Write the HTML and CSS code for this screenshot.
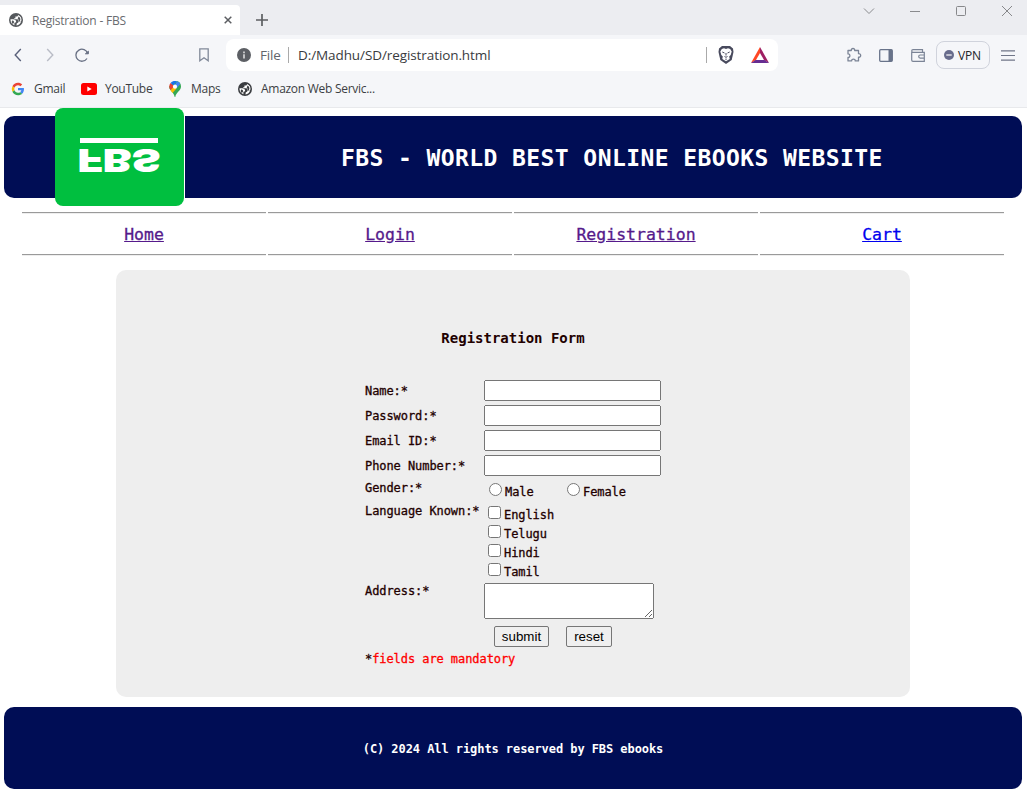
FILE: index.html
```
<!DOCTYPE html>
<html lang="en">
<head>
<meta charset="utf-8">
<title>Registration - FBS</title>
<link rel="stylesheet" href="styles.css">
</head>
<body>
<svg width="0" height="0" class="defs">
  <symbol id="globe" viewBox="0 0 14 14"><circle cx="7" cy="7" r="7" fill="currentColor"/><path d="M1.500 6.300H4.500Q7 6.500 7.200 8.500 7 9.800 5.400 9.700V12.300Q1.300 10.800 1.500 6.300z" fill="#fff"/><path d="M9.300 2L8.300 3.600H6.400V5.200H5.200V6.200H8.400Q9.600 6.500 9.300 8H12.300Q13.200 4 9.300 2z" fill="#fff"/><path d="M9.500 8.300Q10 9.500 7.700 10.500L7.500 12.400Q11 12 12.200 8.300z" fill="#fff"/><path d="M3.500 7.200Q5.500 8 5 9.800L3.800 11Q1.800 9 3.500 7.200z" fill="currentColor"/><path d="M9.600 3.500Q12.500 5.500 10.700 8.600L9.500 8.200Q10 6.500 8.700 5.500z" fill="currentColor"/></symbol>
</svg>
<div class="tabs">
  <div class="tab">
    <svg class="tab-icon" width="14" height="14"><use href="#globe"/></svg>
    <span class="tab-title"><span class="fit">Registration - FBS</span></span>
    <svg width="8" height="8" viewBox="0 0 8 8"><path d="M.7.7l6.600 6.600M7.300.7L.7 7.300" stroke="#5c5e62" stroke-width="1.500"/></svg>
  </div>
  <svg class="new-tab" width="12" height="12" viewBox="0 0 12 12"><path d="M6 0v12M0 6h12" stroke="#5c5e62" stroke-width="1.700"/></svg>
  <div class="win">
    <svg width="12" height="12" viewBox="0 0 12 12"><path d="M1 3.500l5 5 5-5" fill="none" stroke="#8a8b8e"/></svg>
    <svg width="12" height="12" viewBox="0 0 12 12"><path d="M1 6.500h10" stroke="#8a8b8e"/></svg>
    <svg width="12" height="12" viewBox="0 0 12 12"><rect x="1.500" y="1.500" width="9" height="9" rx="1" fill="none" stroke="#87888b"/></svg>
    <svg width="12" height="12" viewBox="0 0 12 12"><path d="M1 1l10 10M11 1L1 11" stroke="#87888b"/></svg>
  </div>
</div>
<div class="toolbar">
  <svg class="back" width="8" height="14" viewBox="0 0 8 14"><path d="M6.800 1L1.200 7l5.600 6" fill="none" stroke="#59607a" stroke-width="1.400"/></svg>
  <svg class="fwd" width="8" height="14" viewBox="0 0 8 14"><path d="M1.200 1l5.600 6-5.600 6" fill="none" stroke="#b9bcc6" stroke-width="1.400"/></svg>
  <svg class="reload" width="15" height="14" viewBox="0 0 15 14"><path d="M12.700 5.500A6 6 0 1 0 12 10.500" fill="none" stroke="#687084" stroke-width="1.300"/><path d="M10.400 5.800h3V3.200z" fill="#687084" stroke="#687084"/></svg>
  <svg class="mark" width="10" height="14" viewBox="0 0 10 14"><path d="M.8.8h8.400v12L5 9.800.8 12.800z" fill="none" stroke="#818999" stroke-width="1.300"/></svg>
  <div class="address">
    <svg class="info" width="14" height="14" viewBox="0 0 14 14"><circle cx="7" cy="7" r="7" fill="#5c5f64"/><path d="M7 3.500v1.700M7 6.200v4.300" stroke="#ddd" stroke-width="1.600"/></svg>
    <span class="scheme"><span class="fit">File</span></span>
    <span class="url"><span class="fit">D:/Madhu/SD/registration.html</span></span>
    <svg class="lion" width="16" height="18" viewBox="0 0 16 18"><path d="M4 0h8l3 2.500.5 3.500-1.800 8L8 18l-5.700-4L.5 6 1 2.500z" fill="#484a5d"/><path d="M3.800 3l2.200-.7 2 .6 2-.6 2.200.7 1.500 2.500-1 3.500-1.500 1.500.5 2.500L8 15.300 4.300 13l.5-2.500L3.300 9l-1-3.500z" fill="#fff"/><path d="M4.300 6l2.200 1M11.700 6l-2.200 1M8 7v2.500M6.500 10.500L8 11.300l1.500-.8M8 12.500v1.500" stroke="#484a5d" stroke-width="1" fill="none"/></svg>
    <svg class="bat" width="18" height="16" viewBox="0 0 18 16"><path d="M9 0L0 16l5-3 4-7z" fill="#ff4724"/><path d="M9 0l9 16-5-3-4-7z" fill="#9e1f63"/><path d="M0 16h18l-4.500-3h-9z" fill="#662d91"/></svg>
  </div>
  <svg class="puzzle" width="16" height="16" viewBox="0 0 16 16"><path d="M2 3.500h3.300C4.800.8 9.200.8 8.700 3.500h3.800v3.200c2.900-.5 2.900 4 0 3.500v3.700H9.200c.2-2.300-3.700-2.300-3.500 0H2v-3.400c2.500.2 2.500-3.800 0-3.600z" fill="none" stroke="#7b8496" stroke-width="1.300" stroke-linejoin="round"/></svg>
  <svg class="panel" width="14" height="13" viewBox="0 0 14 13"><rect x=".7" y=".7" width="12.600" height="11.600" rx="1" fill="none" stroke="#68738a" stroke-width="1.300"/><path d="M9.500 1H13v11H9.500z" fill="#68738a"/></svg>
  <svg class="wallet" width="14" height="13" viewBox="0 0 14 13"><path d="M.7 3V11q0 1.300 1.300 1.300h11.300V3.300H2Q.7 3.300.7 2 .7.700 2 .7h9.500v2.600M13.300 6H9.200q-1.500 0-1.500 1.500T9.200 9.200h4.100" fill="none" stroke="#7b8496" stroke-width="1.200"/></svg>
  <div class="vpn"><svg width="10" height="10" viewBox="0 0 10 10"><circle cx="5" cy="5" r="5" fill="#686c8c"/><path d="M2.300 5h5.400" stroke="#fff" stroke-width="1.200"/></svg><span class="fit">VPN</span></div>
  <svg class="menu" width="14" height="11" viewBox="0 0 14 11"><path d="M0 .8h14M0 5.500h14M0 10.200h14" stroke="#707688" stroke-width="1.200"/></svg>
</div>
<div class="bookmarks">
  <div class="bm gmail"><svg width="14" height="14" viewBox="-3 -3 54 54"><path fill="#EA4335" d="M24 9.500c3.500 0 6.700 1.200 9.200 3.600l6.900-6.900C35.900 2.400 30.500 0 24 0 14.600 0 6.500 5.400 2.600 13.200l8 6.200C12.400 13.700 17.700 9.500 24 9.500z"/><path fill="#4285F4" d="M47 24.600c0-1.600-.2-3.100-.4-4.600H24v9h12.900c-.6 3-2.300 5.500-4.800 7.200l7.700 6C44.400 38 47 31.800 47 24.600z"/><path fill="#FBBC05" d="M10.500 28.600a14.500 14.500 0 0 1 0-9.200l-8-6.200a24 24 0 0 0 0 21.600z"/><path fill="#34A853" d="M24 48c6.500 0 11.900-2.100 15.900-5.800l-7.700-6c-2.200 1.400-4.900 2.300-8.200 2.300-6.300 0-11.600-4.200-13.500-9.900l-8 6.200C6.500 42.600 14.600 48 24 48z"/></svg><span class="fit">Gmail</span></div>
  <div class="bm yt"><svg width="16" height="12" viewBox="0 0 16 12"><rect width="16" height="12" rx="2.500" fill="#f00"/><path d="M6.300 3.500v5L10.700 6z" fill="#fff"/></svg><span class="fit">YouTube</span></div>
  <div class="bm maps"><svg width="12" height="16" viewBox="0 0 12 16"><path d="M1.500 9A6 6 0 0 1 0 5.500L8 0a6 6 0 0 1 4 5.500C12 10 7 11 6.300 16H5.700C5 12.500 3 11 1.500 9z" fill="#34a853"/><path d="M1.500 2L6 5.500 1.500 9A6 6 0 0 1 1.500 2z" fill="#ea4335"/><path d="M1.500 2A6 6 0 0 1 8 .3L4.500 4.500z" fill="#1a73e8"/><path d="M8 .3a6 6 0 0 1 3.300 2.700L7.500 7.500 6 4z" fill="#4285f4"/><path d="M1.500 9.200L4.500 6 7.500 7.400 3.500 12z" fill="#fbbc04"/><circle cx="6" cy="5.700" r="2.100" fill="#fff"/></svg><span class="fit">Maps</span></div>
  <div class="bm aws"><svg width="14" height="14"><use href="#globe"/></svg><span class="fit">Amazon Web Servic...</span></div>
</div>
<main class="page">
  <header class="banner">
    <svg class="logo" width="130" height="98" viewBox="0 0 130 98"><rect x="9" y="8" width="121" height="82" fill="#fff"/><rect width="129" height="98" rx="8" fill="#00bf3f"/><path d="M25 30h78v5H25z" fill="#fff"/><text class="logo-text" transform="translate(22.500 40.800) scale(1 -1)" textLength="83" lengthAdjust="spacingAndGlyphs">FBS</text></svg>
    <h1>FBS - WORLD BEST ONLINE EBOOKS WEBSITE</h1>
  </header>
  <nav class="nav">
    <div><a href="#">Home</a></div>
    <div><a href="#">Login</a></div>
    <div><a href="#">Registration</a></div>
    <div><a class="unvisited" href="#">Cart</a></div>
  </nav>
  <form class="form">
    <h2>Registration Form</h2>
    <div class="fields">
      <div class="row"><label>Name:*</label><input type="text"></div>
      <div class="row"><label>Password:*</label><input type="password"></div>
      <div class="row"><label>Email ID:*</label><input type="text"></div>
      <div class="row"><label>Phone Number:*</label><input type="text"></div>
      <div class="row gender"><label>Gender:*</label><div class="radios"><div class="choice"><input type="radio" name="g"><span>Male</span></div><div class="choice"><input type="radio" name="g"><span>Female</span></div></div></div>
      <div class="row langs"><label>Language Known:*</label><div class="checks"><div class="choice"><input type="checkbox"><span>English</span></div><div class="choice"><input type="checkbox"><span>Telugu</span></div><div class="choice"><input type="checkbox"><span>Hindi</span></div><div class="choice"><input type="checkbox"><span>Tamil</span></div></div></div>
      <div class="row addr"><label>Address:*</label><textarea></textarea></div>
      <div class="buttons"><button type="button" class="submit">submit</button><button type="button" class="reset">reset</button></div>
      <p class="note"><b>*</b>fields are mandatory</p>
    </div>
  </form>
  <footer class="foot">(C) 2024 All rights reserved by FBS ebooks</footer>
</main>
</body>
</html>
```
FILE: styles.css
```
* { box-sizing: border-box; }
body { margin: 0; width: 1027px; height: 797px; overflow: hidden; background: #fff; font-family: "Open Sans", "Noto Sans", sans-serif; font-size: 12px; color: #3c3e43; }
.defs { position: absolute; }
svg { flex: none; display: block; }
.fit { white-space: nowrap; }

.tabs { height: 35px; background: #ecedf1; display: flex; }
.tab { width: 240px; height: 30px; margin-top: 5px; background: #fff; border-radius: 0 4px 0 0; display: flex; align-items: center; padding-left: 9px; color: #6a6c70; }
.tab-icon { color: #55585c; }
.tab-title { width: 192px; margin-left: 9px; letter-spacing: -.22px; }
.new-tab { margin: 14px 0 0 16px; }
.win { margin-left: auto; display: flex; gap: 34px; padding: 5px 14px 0 0; }

.toolbar { height: 40px; background: #f5f6f9; display: flex; align-items: center; padding-left: 14px; }
.fwd { margin-left: 24px; }
.reload { margin-left: 21px; }
.mark { margin-left: 109px; }
.address { width: 552px; height: 32px; margin-left: 17px; background: #fff; border-radius: 8px; display: flex; align-items: center; padding-left: 11px; color: #393b40; }
.scheme { width: 29px; margin-left: 9px; padding-right: 8px; font-size: 13.500px; color: #62656b; border-right: 1px solid #aaa; line-height: 16px; letter-spacing: -.2px; }
.url { flex: 1; margin-left: 9px; font-size: 13.500px; letter-spacing: -.09px; border-right: 1px solid #aaa; line-height: 16px; }
.lion { margin-left: 11px; }
.bat { margin: 0 9px 0 17px; }
.puzzle { margin-left: 68px; }
.panel { margin-left: 17px; }
.wallet { margin-left: 18px; }
.vpn { width: 54px; height: 28px; margin-left: 11px; border: 1px solid #d0d3dc; border-radius: 8px; display: flex; align-items: center; gap: 4px; padding-left: 7px; color: #222429; letter-spacing: -.2px; }
.menu { margin-left: 11px; }

.bookmarks { height: 33px; background: #f5f6f9; border-bottom: 1px solid #e8e9ec; display: flex; padding: 0 0 5px 11px; }
.bm { display: flex; align-items: center; letter-spacing: -.28px; }
.gmail { width: 70px; gap: 9px; }
.yt { width: 88px; gap: 8px; }
.maps { width: 69px; gap: 10px; }
.aws { gap: 9px; }
.aws svg { color: #3a3c40; }

.page { height: 689px; padding: 8px 5px 0 4px; font-family: "DejaVu Sans Mono", monospace; }
.banner { height: 82px; background: #000d55; border-radius: 10px; display: flex; align-items: center; padding-left: 51px; }
.logo { margin-right: 156px; }
.logo-text { font: 900 32px Inter, sans-serif; fill: #fff; }
.banner h1 { margin: 2px 0 0; font-size: 23px; letter-spacing: .41px; white-space: nowrap; color: #fff; }

.nav { display: flex; gap: 2px; margin: 14px 0 0 18px; }
.nav div { width: 244px; height: 43px; margin-bottom: 1px; border: solid #9a9a9a; border-width: 1px 0; box-shadow: inset 0 1px #eee, 0 1px #eee; display: flex; align-items: center; justify-content: center; padding-top: 2px; }
.nav a { font-size: 16.500px; line-height: 20px; color: #551a8b; -webkit-text-stroke: .3px; }
.nav a.unvisited { color: #00e; }

.form { width: 794px; height: 427px; margin: 14px 0 0 112px; background: #eee; border-radius: 10px; padding-top: 58px; color: #200; }
.form h2 { margin: 0; text-align: center; font-size: 14px; line-height: 20px; }
.fields { margin: 32px 0 0 249px; font-size: 12px; letter-spacing: -.07px; -webkit-text-stroke: .3px; }
.row { display: flex; height: 25px; }
.row label { width: 119px; line-height: 22px; white-space: nowrap; }
.row input { margin: 0; }
.row > input { width: 177px; height: 21px; }
.gender { height: 23px; }
.gender label { line-height: 16px; }
.radios { display: flex; padding: 3px 0 0 5px; }
.radios .choice { width: 78px; }
.choice { display: flex; height: 19px; }
.choice input { flex: none; width: 13px; height: 13px; }
.choice span { line-height: 18px; margin-left: 3px; }
.langs { height: 80px; }
.langs label { line-height: 16px; }
.checks { padding: 3px 0 0 4px; }
.addr { height: 43px; }
.addr label { line-height: 16px; }
.addr textarea { width: 170px; height: 36px; margin: 0; }
.buttons { display: flex; gap: 17px; padding-left: 129px; }
.buttons button { height: 21px; padding: 0; margin: 0; font: 13.333px "Liberation Sans", sans-serif; -webkit-text-stroke: 0; border: 1px solid #767676; border-radius: 2px; background: #efefef; color: #000; }
.submit { width: 55px; }
.reset { width: 46px; }
.note { margin: 4px 0 0; line-height: 16px; color: #f00; }
.note b { font-weight: normal; color: #200; }
.foot { height: 82px; margin-top: 10px; padding-top: 2px; background: #000d55; border-radius: 10px; display: flex; align-items: center; justify-content: center; color: #fff; font-size: 12px; font-weight: bold; letter-spacing: -.07px; }
```
